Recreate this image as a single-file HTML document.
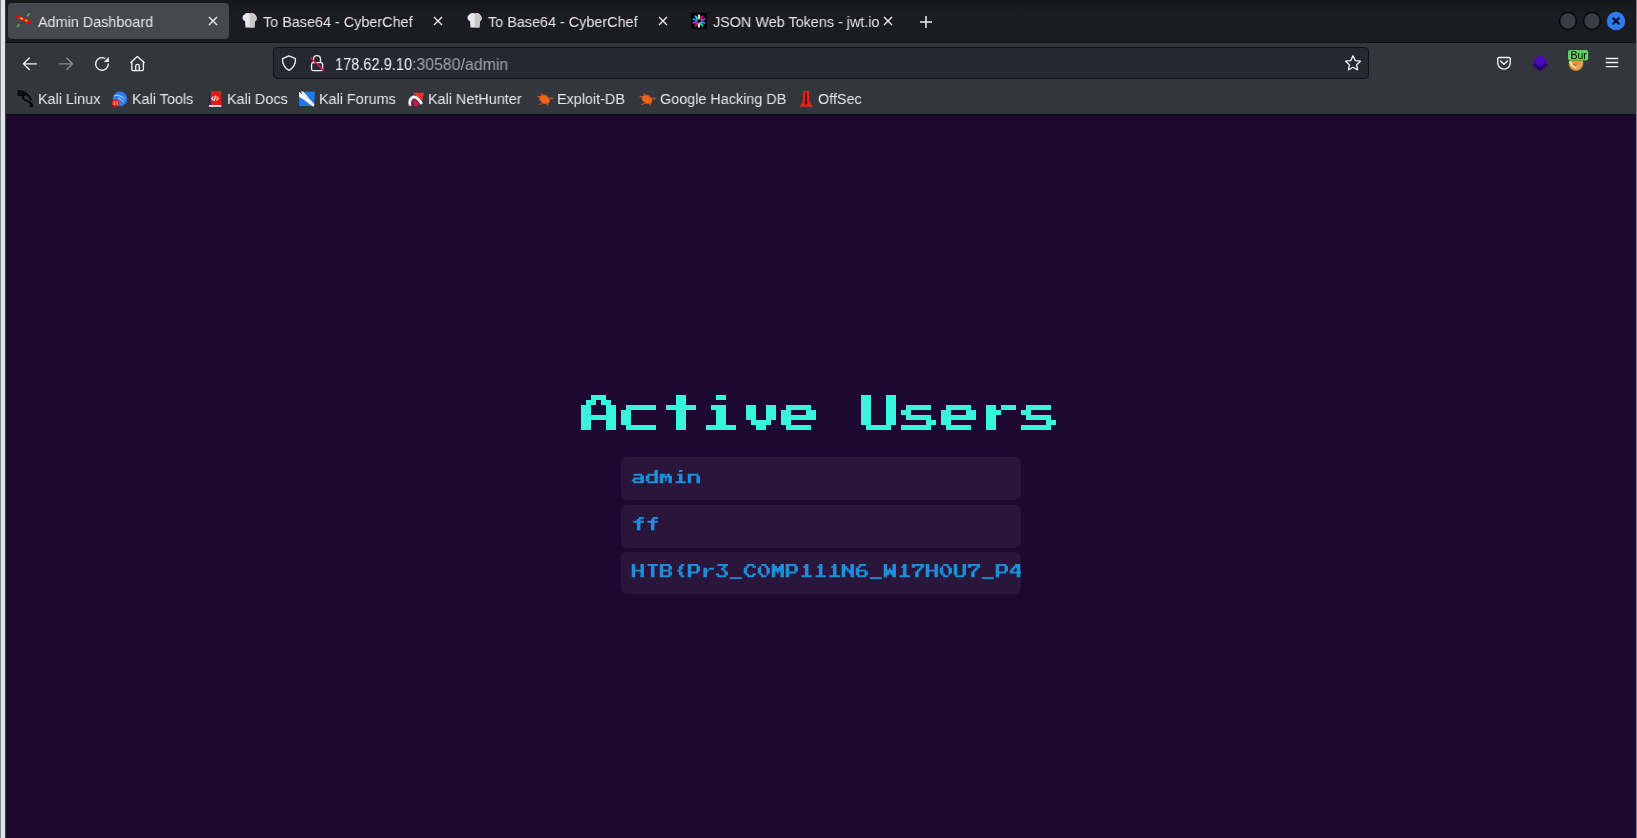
<!DOCTYPE html>
<html><head><meta charset="utf-8">
<style>
*{margin:0;padding:0;box-sizing:border-box}
html,body{width:1637px;height:838px;overflow:hidden;background:#1c1b22;font-family:"Liberation Sans",sans-serif}
.abs{position:absolute}
#lb{position:absolute;left:0;top:0;width:6px;height:838px;background:#e4e5e8;border-left:1px solid #80868c;border-right:1px solid #3a3c40}
#rb{position:absolute;left:1636px;top:0;width:1px;height:838px;background:#7a7a7a}
#tabs{position:absolute;left:6px;top:0;width:1630px;height:43px;background:linear-gradient(#17181c,#1b1c21 40%);border-bottom:1px solid #111216}
.tab{position:absolute;top:3px;height:36px;border-radius:4px}
.tab.sel{background:#46484f}
.tt{position:absolute;top:13px;font-size:15.1px;line-height:17px;color:#e8e8ea;white-space:nowrap;transform:scaleX(0.953);transform-origin:0 0;will-change:transform}
#nav{position:absolute;left:6px;top:43px;width:1630px;height:42px;background:#34363e}
#url{position:absolute;left:273px;top:47px;width:1096px;height:32px;background:#262831;border:1px solid #0f1014;border-radius:4px}
.ut{position:absolute;top:54.7px;font-size:16.5px;line-height:19px;color:#f4f4f5;white-space:nowrap;transform-origin:0 0;will-change:transform}
#bm{position:absolute;left:6px;top:85px;width:1630px;height:30px;background:#34363e;border-bottom:1px solid #0c0d10}
.bk{position:absolute;top:90px;font-size:15.1px;line-height:17px;color:#e8e8ea;white-space:nowrap;transform:scaleX(0.953);transform-origin:0 0;will-change:transform}
#content{position:absolute;left:6px;top:115px;width:1630px;height:723px;background:#1b0932}
.box{position:absolute;left:621px;width:400px;height:42.7px;background:#2a153b;border-radius:6px}
svg{position:absolute;left:0;top:0;overflow:visible}
</style></head><body>
<div id="lb"></div>
<div id="tabs"></div>
<div class="tab sel" style="left:8px;width:221px"></div>
<span class="tt" style="left:38px">Admin Dashboard</span>
<span class="tt" style="left:263px">To Base64 - CyberChef</span>
<span class="tt" style="left:488px">To Base64 - CyberChef</span>
<span class="tt" style="left:713px">JSON Web Tokens - jwt.io</span>
<div id="nav"></div>
<div id="url"></div>
<span class="ut" style="left:334.5px;transform:scaleX(0.885)">178.62.9.10</span><span class="ut" style="left:411.5px;transform:scaleX(0.962);color:#a3a4a9">:30580/admin</span>
<div id="bm"></div>
<span class="bk" style="left:38px">Kali Linux</span>
<span class="bk" style="left:132px">Kali Tools</span>
<span class="bk" style="left:227px">Kali Docs</span>
<span class="bk" style="left:319px">Kali Forums</span>
<span class="bk" style="left:428px">Kali NetHunter</span>
<span class="bk" style="left:557px">Exploit-DB</span>
<span class="bk" style="left:660px">Google Hacking DB</span>
<span class="bk" style="left:818px">OffSec</span>
<div id="content"></div>
<div class="box" style="top:457px"></div>
<div class="box" style="top:504.9px"></div>
<div class="box" style="top:551.8px"></div>
<svg width="1637" height="838" viewBox="0 0 1637 838">
<path fill="#36f6db" d="M591 395h15v5h-15zM586 400h10v5h-10zM601 400h10v5h-10zM581 405h10v5h-10zM606 405h10v5h-10zM581 410h10v5h-10zM606 410h10v5h-10zM581 415h35v5h-35zM581 420h10v5h-10zM606 420h10v5h-10zM581 425h10v5h-10zM606 425h10v5h-10zM626 405h30v5h-30zM621 410h10v5h-10zM621 415h10v5h-10zM621 420h10v5h-10zM626 425h30v5h-30zM676 395h10v5h-10zM676 400h10v5h-10zM666 405h30v5h-30zM676 410h10v5h-10zM676 415h10v5h-10zM676 420h10v5h-10zM676 425h10v5h-10zM716 395h10v5h-10zM711 405h15v5h-15zM716 410h10v5h-10zM716 415h10v5h-10zM716 420h10v5h-10zM706 425h30v5h-30zM746 405h10v5h-10zM766 405h10v5h-10zM746 410h10v5h-10zM766 410h10v5h-10zM746 415h10v5h-10zM766 415h10v5h-10zM751 420h20v5h-20zM756 425h10v5h-10zM786 405h25v5h-25zM781 410h10v5h-10zM806 410h10v5h-10zM781 415h35v5h-35zM781 420h10v5h-10zM786 425h25v5h-25zM861 395h10v5h-10zM886 395h10v5h-10zM861 400h10v5h-10zM886 400h10v5h-10zM861 405h10v5h-10zM886 405h10v5h-10zM861 410h10v5h-10zM886 410h10v5h-10zM861 415h10v5h-10zM886 415h10v5h-10zM861 420h10v5h-10zM886 420h10v5h-10zM866 425h25v5h-25zM906 405h25v5h-25zM901 410h10v5h-10zM906 415h25v5h-25zM926 420h10v5h-10zM901 425h30v5h-30zM946 405h25v5h-25zM941 410h10v5h-10zM966 410h10v5h-10zM941 415h35v5h-35zM941 420h10v5h-10zM946 425h25v5h-25zM986 405h10v5h-10zM1001 405h15v5h-15zM986 410h15v5h-15zM986 415h10v5h-10zM986 420h10v5h-10zM986 425h10v5h-10zM1026 405h25v5h-25zM1021 410h10v5h-10zM1026 415h25v5h-25zM1046 420h10v5h-10zM1021 425h30v5h-30z"/>
<defs><clipPath id="cl"><rect x="621" y="440" width="400" height="200"/></clipPath></defs>
<path fill="#1a90da" clip-path="url(#cl)" d="M633.45 473.8h8.75v1.875h-8.75zM640.45 475.675h3.5v1.875h-3.5zM633.45 477.55h10.5v1.875h-10.5zM631.7 479.425h3.5v1.875h-3.5zM640.45 479.425h3.5v1.875h-3.5zM633.45 481.3h10.5v1.875h-10.5zM654.45 470.05h3.5v1.875h-3.5zM654.45 471.925h3.5v1.875h-3.5zM647.45 473.8h10.5v1.875h-10.5zM645.7 475.675h3.5v1.875h-3.5zM654.45 475.675h3.5v1.875h-3.5zM645.7 477.55h3.5v1.875h-3.5zM654.45 477.55h3.5v1.875h-3.5zM645.7 479.425h3.5v1.875h-3.5zM654.45 479.425h3.5v1.875h-3.5zM647.45 481.3h10.5v1.875h-10.5zM659.7 473.8h5.25v1.875h-5.25zM666.7 473.8h3.5v1.875h-3.5zM659.7 475.675h12.25v1.875h-12.25zM659.7 477.55h3.5v1.875h-3.5zM664.95 477.55h1.75v1.875h-1.75zM668.45 477.55h3.5v1.875h-3.5zM659.7 479.425h3.5v1.875h-3.5zM664.95 479.425h1.75v1.875h-1.75zM668.45 479.425h3.5v1.875h-3.5zM659.7 481.3h3.5v1.875h-3.5zM668.45 481.3h3.5v1.875h-3.5zM678.95 470.05h3.5v1.875h-3.5zM677.2 473.8h5.25v1.875h-5.25zM678.95 475.675h3.5v1.875h-3.5zM678.95 477.55h3.5v1.875h-3.5zM678.95 479.425h3.5v1.875h-3.5zM675.45 481.3h10.5v1.875h-10.5zM687.7 473.8h10.5v1.875h-10.5zM687.7 475.675h3.5v1.875h-3.5zM696.45 475.675h3.5v1.875h-3.5zM687.7 477.55h3.5v1.875h-3.5zM696.45 477.55h3.5v1.875h-3.5zM687.7 479.425h3.5v1.875h-3.5zM696.45 479.425h3.5v1.875h-3.5zM687.7 481.3h3.5v1.875h-3.5zM696.45 481.3h3.5v1.875h-3.5zM638.7 517.1h5.25v1.875h-5.25zM636.95 518.975h3.5v1.875h-3.5zM633.45 520.85h10.5v1.875h-10.5zM636.95 522.725h3.5v1.875h-3.5zM636.95 524.6h3.5v1.875h-3.5zM636.95 526.475h3.5v1.875h-3.5zM636.95 528.35h3.5v1.875h-3.5zM652.7 517.1h5.25v1.875h-5.25zM650.95 518.975h3.5v1.875h-3.5zM647.45 520.85h10.5v1.875h-10.5zM650.95 522.725h3.5v1.875h-3.5zM650.95 524.6h3.5v1.875h-3.5zM650.95 526.475h3.5v1.875h-3.5zM650.95 528.35h3.5v1.875h-3.5zM631.7 564h3.5v1.875h-3.5zM640.45 564h3.5v1.875h-3.5zM631.7 565.875h3.5v1.875h-3.5zM640.45 565.875h3.5v1.875h-3.5zM631.7 567.75h3.5v1.875h-3.5zM640.45 567.75h3.5v1.875h-3.5zM631.7 569.625h12.25v1.875h-12.25zM631.7 571.5h3.5v1.875h-3.5zM640.45 571.5h3.5v1.875h-3.5zM631.7 573.375h3.5v1.875h-3.5zM640.45 573.375h3.5v1.875h-3.5zM631.7 575.25h3.5v1.875h-3.5zM640.45 575.25h3.5v1.875h-3.5zM647.45 564h10.5v1.875h-10.5zM650.95 565.875h3.5v1.875h-3.5zM650.95 567.75h3.5v1.875h-3.5zM650.95 569.625h3.5v1.875h-3.5zM650.95 571.5h3.5v1.875h-3.5zM650.95 573.375h3.5v1.875h-3.5zM650.95 575.25h3.5v1.875h-3.5zM659.7 564h10.5v1.875h-10.5zM659.7 565.875h3.5v1.875h-3.5zM668.45 565.875h3.5v1.875h-3.5zM659.7 567.75h3.5v1.875h-3.5zM668.45 567.75h3.5v1.875h-3.5zM659.7 569.625h10.5v1.875h-10.5zM659.7 571.5h3.5v1.875h-3.5zM668.45 571.5h3.5v1.875h-3.5zM659.7 573.375h3.5v1.875h-3.5zM668.45 573.375h3.5v1.875h-3.5zM659.7 575.25h10.5v1.875h-10.5zM680.7 564h3.5v1.875h-3.5zM678.95 565.875h3.5v1.875h-3.5zM678.95 567.75h3.5v1.875h-3.5zM677.2 569.625h3.5v1.875h-3.5zM678.95 571.5h3.5v1.875h-3.5zM678.95 573.375h3.5v1.875h-3.5zM680.7 575.25h3.5v1.875h-3.5zM687.7 564h10.5v1.875h-10.5zM687.7 565.875h3.5v1.875h-3.5zM696.45 565.875h3.5v1.875h-3.5zM687.7 567.75h3.5v1.875h-3.5zM696.45 567.75h3.5v1.875h-3.5zM687.7 569.625h3.5v1.875h-3.5zM696.45 569.625h3.5v1.875h-3.5zM687.7 571.5h10.5v1.875h-10.5zM687.7 573.375h3.5v1.875h-3.5zM687.7 575.25h3.5v1.875h-3.5zM703.45 567.75h3.5v1.875h-3.5zM708.7 567.75h5.25v1.875h-5.25zM703.45 569.625h5.25v1.875h-5.25zM703.45 571.5h3.5v1.875h-3.5zM703.45 573.375h3.5v1.875h-3.5zM703.45 575.25h3.5v1.875h-3.5zM717.45 564h10.5v1.875h-10.5zM722.7 565.875h3.5v1.875h-3.5zM720.95 567.75h3.5v1.875h-3.5zM722.7 569.625h3.5v1.875h-3.5zM724.45 571.5h3.5v1.875h-3.5zM715.7 573.375h3.5v1.875h-3.5zM724.45 573.375h3.5v1.875h-3.5zM717.45 575.25h8.75v1.875h-8.75zM729.7 577.125h12.25v1.875h-12.25zM747.2 564h7v1.875h-7zM745.45 565.875h3.5v1.875h-3.5zM752.45 565.875h3.5v1.875h-3.5zM743.7 567.75h3.5v1.875h-3.5zM743.7 569.625h3.5v1.875h-3.5zM743.7 571.5h3.5v1.875h-3.5zM745.45 573.375h3.5v1.875h-3.5zM752.45 573.375h3.5v1.875h-3.5zM747.2 575.25h7v1.875h-7zM761.2 564h5.25v1.875h-5.25zM759.45 565.875h1.75v1.875h-1.75zM764.7 565.875h3.5v1.875h-3.5zM757.7 567.75h3.5v1.875h-3.5zM766.45 567.75h3.5v1.875h-3.5zM757.7 569.625h3.5v1.875h-3.5zM766.45 569.625h3.5v1.875h-3.5zM757.7 571.5h3.5v1.875h-3.5zM766.45 571.5h3.5v1.875h-3.5zM759.45 573.375h3.5v1.875h-3.5zM766.45 573.375h1.75v1.875h-1.75zM761.2 575.25h5.25v1.875h-5.25zM771.7 564h3.5v1.875h-3.5zM780.45 564h3.5v1.875h-3.5zM771.7 565.875h5.25v1.875h-5.25zM778.7 565.875h5.25v1.875h-5.25zM771.7 567.75h12.25v1.875h-12.25zM771.7 569.625h12.25v1.875h-12.25zM771.7 571.5h3.5v1.875h-3.5zM776.95 571.5h1.75v1.875h-1.75zM780.45 571.5h3.5v1.875h-3.5zM771.7 573.375h3.5v1.875h-3.5zM780.45 573.375h3.5v1.875h-3.5zM771.7 575.25h3.5v1.875h-3.5zM780.45 575.25h3.5v1.875h-3.5zM785.7 564h10.5v1.875h-10.5zM785.7 565.875h3.5v1.875h-3.5zM794.45 565.875h3.5v1.875h-3.5zM785.7 567.75h3.5v1.875h-3.5zM794.45 567.75h3.5v1.875h-3.5zM785.7 569.625h3.5v1.875h-3.5zM794.45 569.625h3.5v1.875h-3.5zM785.7 571.5h10.5v1.875h-10.5zM785.7 573.375h3.5v1.875h-3.5zM785.7 575.25h3.5v1.875h-3.5zM804.95 564h3.5v1.875h-3.5zM803.2 565.875h5.25v1.875h-5.25zM804.95 567.75h3.5v1.875h-3.5zM804.95 569.625h3.5v1.875h-3.5zM804.95 571.5h3.5v1.875h-3.5zM804.95 573.375h3.5v1.875h-3.5zM801.45 575.25h10.5v1.875h-10.5zM818.95 564h3.5v1.875h-3.5zM817.2 565.875h5.25v1.875h-5.25zM818.95 567.75h3.5v1.875h-3.5zM818.95 569.625h3.5v1.875h-3.5zM818.95 571.5h3.5v1.875h-3.5zM818.95 573.375h3.5v1.875h-3.5zM815.45 575.25h10.5v1.875h-10.5zM832.95 564h3.5v1.875h-3.5zM831.2 565.875h5.25v1.875h-5.25zM832.95 567.75h3.5v1.875h-3.5zM832.95 569.625h3.5v1.875h-3.5zM832.95 571.5h3.5v1.875h-3.5zM832.95 573.375h3.5v1.875h-3.5zM829.45 575.25h10.5v1.875h-10.5zM841.7 564h3.5v1.875h-3.5zM850.45 564h3.5v1.875h-3.5zM841.7 565.875h5.25v1.875h-5.25zM850.45 565.875h3.5v1.875h-3.5zM841.7 567.75h7v1.875h-7zM850.45 567.75h3.5v1.875h-3.5zM841.7 569.625h3.5v1.875h-3.5zM846.95 569.625h7v1.875h-7zM841.7 571.5h3.5v1.875h-3.5zM848.7 571.5h5.25v1.875h-5.25zM841.7 573.375h3.5v1.875h-3.5zM850.45 573.375h3.5v1.875h-3.5zM841.7 575.25h3.5v1.875h-3.5zM850.45 575.25h3.5v1.875h-3.5zM859.2 564h7v1.875h-7zM857.45 565.875h3.5v1.875h-3.5zM855.7 567.75h3.5v1.875h-3.5zM855.7 569.625h10.5v1.875h-10.5zM855.7 571.5h3.5v1.875h-3.5zM864.45 571.5h3.5v1.875h-3.5zM855.7 573.375h3.5v1.875h-3.5zM864.45 573.375h3.5v1.875h-3.5zM857.45 575.25h8.75v1.875h-8.75zM869.7 577.125h12.25v1.875h-12.25zM883.7 564h3.5v1.875h-3.5zM892.45 564h3.5v1.875h-3.5zM883.7 565.875h3.5v1.875h-3.5zM892.45 565.875h3.5v1.875h-3.5zM883.7 567.75h3.5v1.875h-3.5zM888.95 567.75h1.75v1.875h-1.75zM892.45 567.75h3.5v1.875h-3.5zM883.7 569.625h12.25v1.875h-12.25zM883.7 571.5h12.25v1.875h-12.25zM883.7 573.375h5.25v1.875h-5.25zM890.7 573.375h5.25v1.875h-5.25zM883.7 575.25h3.5v1.875h-3.5zM892.45 575.25h3.5v1.875h-3.5zM902.95 564h3.5v1.875h-3.5zM901.2 565.875h5.25v1.875h-5.25zM902.95 567.75h3.5v1.875h-3.5zM902.95 569.625h3.5v1.875h-3.5zM902.95 571.5h3.5v1.875h-3.5zM902.95 573.375h3.5v1.875h-3.5zM899.45 575.25h10.5v1.875h-10.5zM911.7 564h12.25v1.875h-12.25zM911.7 565.875h3.5v1.875h-3.5zM920.45 565.875h3.5v1.875h-3.5zM918.7 567.75h3.5v1.875h-3.5zM916.95 569.625h3.5v1.875h-3.5zM915.2 571.5h3.5v1.875h-3.5zM915.2 573.375h3.5v1.875h-3.5zM915.2 575.25h3.5v1.875h-3.5zM925.7 564h3.5v1.875h-3.5zM934.45 564h3.5v1.875h-3.5zM925.7 565.875h3.5v1.875h-3.5zM934.45 565.875h3.5v1.875h-3.5zM925.7 567.75h3.5v1.875h-3.5zM934.45 567.75h3.5v1.875h-3.5zM925.7 569.625h12.25v1.875h-12.25zM925.7 571.5h3.5v1.875h-3.5zM934.45 571.5h3.5v1.875h-3.5zM925.7 573.375h3.5v1.875h-3.5zM934.45 573.375h3.5v1.875h-3.5zM925.7 575.25h3.5v1.875h-3.5zM934.45 575.25h3.5v1.875h-3.5zM943.2 564h5.25v1.875h-5.25zM941.45 565.875h1.75v1.875h-1.75zM946.7 565.875h3.5v1.875h-3.5zM939.7 567.75h3.5v1.875h-3.5zM948.45 567.75h3.5v1.875h-3.5zM939.7 569.625h3.5v1.875h-3.5zM948.45 569.625h3.5v1.875h-3.5zM939.7 571.5h3.5v1.875h-3.5zM948.45 571.5h3.5v1.875h-3.5zM941.45 573.375h3.5v1.875h-3.5zM948.45 573.375h1.75v1.875h-1.75zM943.2 575.25h5.25v1.875h-5.25zM953.7 564h3.5v1.875h-3.5zM962.45 564h3.5v1.875h-3.5zM953.7 565.875h3.5v1.875h-3.5zM962.45 565.875h3.5v1.875h-3.5zM953.7 567.75h3.5v1.875h-3.5zM962.45 567.75h3.5v1.875h-3.5zM953.7 569.625h3.5v1.875h-3.5zM962.45 569.625h3.5v1.875h-3.5zM953.7 571.5h3.5v1.875h-3.5zM962.45 571.5h3.5v1.875h-3.5zM953.7 573.375h3.5v1.875h-3.5zM962.45 573.375h3.5v1.875h-3.5zM955.45 575.25h8.75v1.875h-8.75zM967.7 564h12.25v1.875h-12.25zM967.7 565.875h3.5v1.875h-3.5zM976.45 565.875h3.5v1.875h-3.5zM974.7 567.75h3.5v1.875h-3.5zM972.95 569.625h3.5v1.875h-3.5zM971.2 571.5h3.5v1.875h-3.5zM971.2 573.375h3.5v1.875h-3.5zM971.2 575.25h3.5v1.875h-3.5zM981.7 577.125h12.25v1.875h-12.25zM995.7 564h10.5v1.875h-10.5zM995.7 565.875h3.5v1.875h-3.5zM1004.45 565.875h3.5v1.875h-3.5zM995.7 567.75h3.5v1.875h-3.5zM1004.45 567.75h3.5v1.875h-3.5zM995.7 569.625h3.5v1.875h-3.5zM1004.45 569.625h3.5v1.875h-3.5zM995.7 571.5h10.5v1.875h-10.5zM995.7 573.375h3.5v1.875h-3.5zM995.7 575.25h3.5v1.875h-3.5zM1014.95 564h5.25v1.875h-5.25zM1013.2 565.875h7v1.875h-7zM1011.45 567.75h3.5v1.875h-3.5zM1016.7 567.75h3.5v1.875h-3.5zM1009.7 569.625h3.5v1.875h-3.5zM1016.7 569.625h3.5v1.875h-3.5zM1009.7 571.5h12.25v1.875h-12.25zM1016.7 573.375h3.5v1.875h-3.5zM1016.7 575.25h3.5v1.875h-3.5z"/>
<!-- tab favicons -->
<g>
  <path d="M19.5 24.5 L27.5 15.8" stroke="#2c3a55" stroke-width="0.9"/>
  <ellipse cx="18.3" cy="25.6" rx="2.3" ry="1.1" fill="#5c9a62" transform="rotate(-50 18.3 25.6)"/>
  <ellipse cx="28.2" cy="14.9" rx="2.3" ry="1.1" fill="#5c9a62" transform="rotate(-50 28.2 14.9)"/>
  <ellipse cx="24.1" cy="19.8" rx="8.9" ry="1.9" fill="#e20a0a" transform="rotate(24 24.1 19.8)"/>
  <ellipse cx="21.5" cy="18.5" rx="2" ry="1" fill="#c8b048" transform="rotate(24 21.5 18.5)"/>
  <ellipse cx="26.2" cy="20.6" rx="1.6" ry="1.1" fill="#b8b040" transform="rotate(24 26.2 20.6)"/>
</g>
<g fill="#e8e8e8">
  <path d="M245.5 27.5 L245 21 C242 20.5 241.5 16 244.5 14.5 C246 12.5 249 12.7 250 13.5 C252 12.5 255 13.5 255.5 15.5 C257.5 17 257 20.5 254.8 21.5 L254.5 27.5Z"/>
  <path d="M249.7 13.2 L254.5 14 C257.5 17 257 20.5 254.8 21.5 L254.5 27.5 L249.7 27.5Z" fill="#c8c8c8"/>
</g>
<g fill="#e8e8e8">
  <path d="M470.5 27.5 L470 21 C467 20.5 466.5 16 469.5 14.5 C471 12.5 474 12.7 475 13.5 C477 12.5 480 13.5 480.5 15.5 C482.5 17 482 20.5 479.8 21.5 L479.5 27.5Z"/>
  <path d="M474.7 13.2 L479.5 14 C482.5 17 482 20.5 479.8 21.5 L479.5 27.5 L474.7 27.5Z" fill="#c8c8c8"/>
</g>
<rect x="691" y="13" width="16" height="16" fill="#000"/>
<g stroke-width="1.9" stroke-linecap="round" transform="translate(699 21)">
  <path d="M0 -2.6 V-5.8 M0 2.6 V5.8" stroke="#f0f0f0"/>
  <path d="M1.5 -2.1 L3.4 -4.7 M-1.5 2.1 L-3.4 4.7" stroke="#f0124e"/>
  <path d="M2.5 -0.8 L5.5 -1.8 M-2.5 0.8 L-5.5 1.8" stroke="#c72ff0"/>
  <path d="M2.5 0.8 L5.5 1.8 M-2.5 -0.8 L-5.5 -1.8" stroke="#13a0e8"/>
  <path d="M1.5 2.1 L3.4 4.7 M-1.5 -2.1 L-3.4 -4.7" stroke="#10e0c8"/>
</g>
<!-- tab close buttons -->
<g stroke="#f0f0f2" stroke-width="1.3">
  <path d="M209 17 L217 25 M217 17 L209 25"/>
  <path d="M434 17 L442 25 M442 17 L434 25"/>
  <path d="M659 17 L667 25 M667 17 L659 25"/>
  <path d="M884 17 L892 25 M892 17 L884 25"/>
</g>
<path d="M926 16 V28 M920 22 H932" stroke="#f0f0f2" stroke-width="1.5"/>
<!-- window controls -->
<circle cx="1568" cy="21" r="8.4" fill="#393c47" stroke="#050608" stroke-width="1.4"/>
<circle cx="1592" cy="21" r="8.4" fill="#393c47" stroke="#050608" stroke-width="1.4"/>
<circle cx="1616" cy="21" r="9.2" fill="#2e7cf0"/>
<path d="M1612.6 17.6 L1619.4 24.4 M1619.4 17.6 L1612.6 24.4" stroke="#000" stroke-width="2"/>
<!-- nav buttons -->
<g fill="none" stroke="#f4f4f5" stroke-width="1.35" stroke-linejoin="round" stroke-linecap="round">
  <path d="M23.5 63.8 H36.5 M29.3 58 L23.5 63.8 L29.3 69.6"/>
  <path d="M59.5 63.8 H72.5 M66.7 58 L72.5 63.8 L66.7 69.6" stroke="#8b8c92"/>
  <path d="M108.3 64 A6.3 6.3 0 1 1 104.8 58.3"/>
  <path d="M130.8 62.6 L137.3 56.5 L144.2 62.6 M131.8 61.5 V69.3 Q131.8 70.6 133 70.6 H142.2 Q143.4 70.6 143.4 69.3 V61.5 M135.7 70.5 V65.8 Q135.7 64.4 137.5 64.4 Q139.3 64.4 139.3 65.8 V70.5"/>
</g>
<path d="M108.9 56.8 V62 H103.8Z" fill="#f4f4f5"/>
<!-- urlbar icons -->
<g fill="none" stroke="#f0f0f2" stroke-width="1.3" stroke-linejoin="round">
  <path d="M289 55.8 L295.5 58.6 Q295.8 66.8 289 70.4 Q282.2 66.8 282.5 58.6Z"/>
  <path d="M313.5 62.6 V59.3 Q313.5 55.7 317 55.7 Q320.5 55.7 320.5 59.3 V62.6"/>
  <rect x="311.6" y="62.6" width="11" height="8" rx="1.6"/>
  <path d="M1353 55.8 L1355.3 60.6 L1360.4 61.2 L1356.6 64.7 L1357.6 69.9 L1353 67.3 L1348.4 69.9 L1349.4 64.7 L1345.6 61.2 L1350.7 60.6Z"/>
</g>
<path d="M310.5 57.5 L323.8 70.6" stroke="#e8144a" stroke-width="1.5"/>
<!-- right toolbar icons -->
<g fill="none" stroke="#f0f0f2" stroke-width="1.4" stroke-linecap="round" stroke-linejoin="round">
  <path d="M1499 57.5 H1509 Q1510.3 57.5 1510.3 58.8 V62.8 A6.3 6.3 0 0 1 1497.7 62.8 V58.8 Q1497.7 57.5 1499 57.5Z"/>
  <path d="M1500.6 60.9 L1504 64.2 L1507.4 60.9"/>
  <path d="M1606.3 58.5 H1617.7 M1606.3 62.55 H1617.7 M1606.3 66.6 H1617.7"/>
</g>
<path d="M1532.3 65 L1540 59 L1547.9 65 L1540 70.9Z" fill="#22007a"/>
<path d="M1532.3 61 L1540 55 L1547.9 61 L1540 66.9Z" fill="#4a0ab8"/>
<circle cx="1576" cy="63.5" r="7" fill="#f0962c" stroke="#e08a30" stroke-width="0.8"/>
<path d="M1569.2 61 Q1570.5 67.5 1576.5 68.8 L1576.5 67.4 Q1572 66.5 1571.2 61Z" fill="#e4e6e8"/><path d="M1576.5 68.8 Q1581 68 1582.8 61 L1581.6 61 Q1580 66.5 1576.5 67.4Z" fill="#b8bcc0"/><ellipse cx="1574.5" cy="64.5" rx="1.4" ry="0.6" fill="#7a6a60"/>
<rect x="1567.6" y="49.6" width="20.8" height="11.4" rx="2" fill="#1a1f1a" opacity="0.5"/><rect x="1568" y="50" width="20.2" height="10.6" rx="2" fill="#5ed25e"/>
<clipPath id="bc"><rect x="1568" y="50" width="20.2" height="10.6"/></clipPath><text x="1570.4" y="58.9" font-family="Liberation Sans" font-size="10.6" fill="#000" clip-path="url(#bc)">Bur</text>
<!-- bookmark icons -->
<g fill="none" stroke="#050505" stroke-width="1.7" stroke-linecap="round">
  <path d="M18.2 91.2 Q24 91 26 94 Q29.5 96 31 99.5"/>
  <path d="M18.2 93 Q22 93 24.5 94.5"/>
  <path d="M18.5 94.8 Q21 95 23 96"/>
  <path d="M26 93.5 Q22 96 23 98.5 Q24.5 100.5 28.5 101.5 Q32.5 103 32.2 106.3"/>
  <path d="M29.5 102 Q31 104 30.8 106.5"/>
</g>
<circle cx="120" cy="98.8" r="7.2" fill="#2a7ef0"/>
<path d="M114 96 Q117 94.5 120 96 Q123 97 124.5 99 M118 98 Q121 99 123.5 101.8" stroke="#cfe6ff" stroke-width="0.9" fill="none"/>
<circle cx="115.6" cy="103" r="3.8" fill="#e81818"/>
<path d="M114.2 101.5 V105 M117 101.5 V105" stroke="#fff" stroke-width="0.8"/>
<rect x="209" y="91" width="12.2" height="15.8" fill="#dd1a14"/>
<rect x="209" y="91" width="1.6" height="14.2" fill="#0a2a78"/>
<rect x="209" y="105" width="12.2" height="1.8" fill="#eee"/>
<path d="M213.5 96.5 L211.8 98.4 L213.5 100.3 M216.5 96.5 L218.2 98.4 L216.5 100.3 M215.6 95.6 L214.2 101" stroke="#fff" stroke-width="1.1" fill="none"/>
<path d="M299.5 91.8 L315 91.8 L314 106 L299 106Z" fill="#1f78ee"/>
<path d="M299 92.2 L302.5 91.2 L306 94.5 L309.5 99 L314.6 104.2 L313.2 106.8 L308 103 L303.5 99.5 L299.2 97Z" fill="#f6f6f6"/>
<path d="M299.5 91.5 L302 93.5" stroke="#111" stroke-width="1"/>
<path d="M412.7 92.8 L424 92.8 L421.9 101.7Z" fill="#f03030"/>
<path d="M410 106 Q408.5 98.5 413.5 96.8 Q417.5 96.5 421.8 104" stroke="#f4f4f4" stroke-width="2.8" fill="none"/>
<path d="M412.5 99 Q416 99.5 419.5 105.5 L414 106Z" fill="#d8184a"/>
<path d="M408.2 103.5 L410 106 L408.5 106Z" fill="#c01450"/>
<g fill="#f0641a">
  <ellipse cx="544.5" cy="99.5" rx="5.6" ry="3.9" transform="rotate(28 544.5 99.5)"/>
  <path d="M541 94 L547 96 M548 98.5 L553 98.5 M546 103 L548 105 M544 103 L539 104.5 M540 97 L537.5 96.5" stroke="#d85a20" stroke-width="1.3" stroke-linecap="round" opacity="0.8"/>
</g>
<g fill="#f0641a">
  <ellipse cx="647" cy="99.5" rx="5.6" ry="3.9" transform="rotate(28 647 99.5)"/>
  <path d="M643.5 94 L649.5 96 M650.5 98.5 L655.5 98.5 M648.5 103 L650.5 105 M646.5 103 L641.5 104.5 M642.5 97 L640 96.5" stroke="#d85a20" stroke-width="1.3" stroke-linecap="round" opacity="0.8"/>
</g>
<path d="M803 91 H809.1 V101.4 L813 106.8 H799.2 L803 101.4Z" fill="#e8201e"/>
<path d="M806 92.5 V104.5 M804.5 102.5 H807.5" stroke="#1a0000" stroke-width="1.2"/>

</svg>
<div id="rb"></div>
</body></html>
